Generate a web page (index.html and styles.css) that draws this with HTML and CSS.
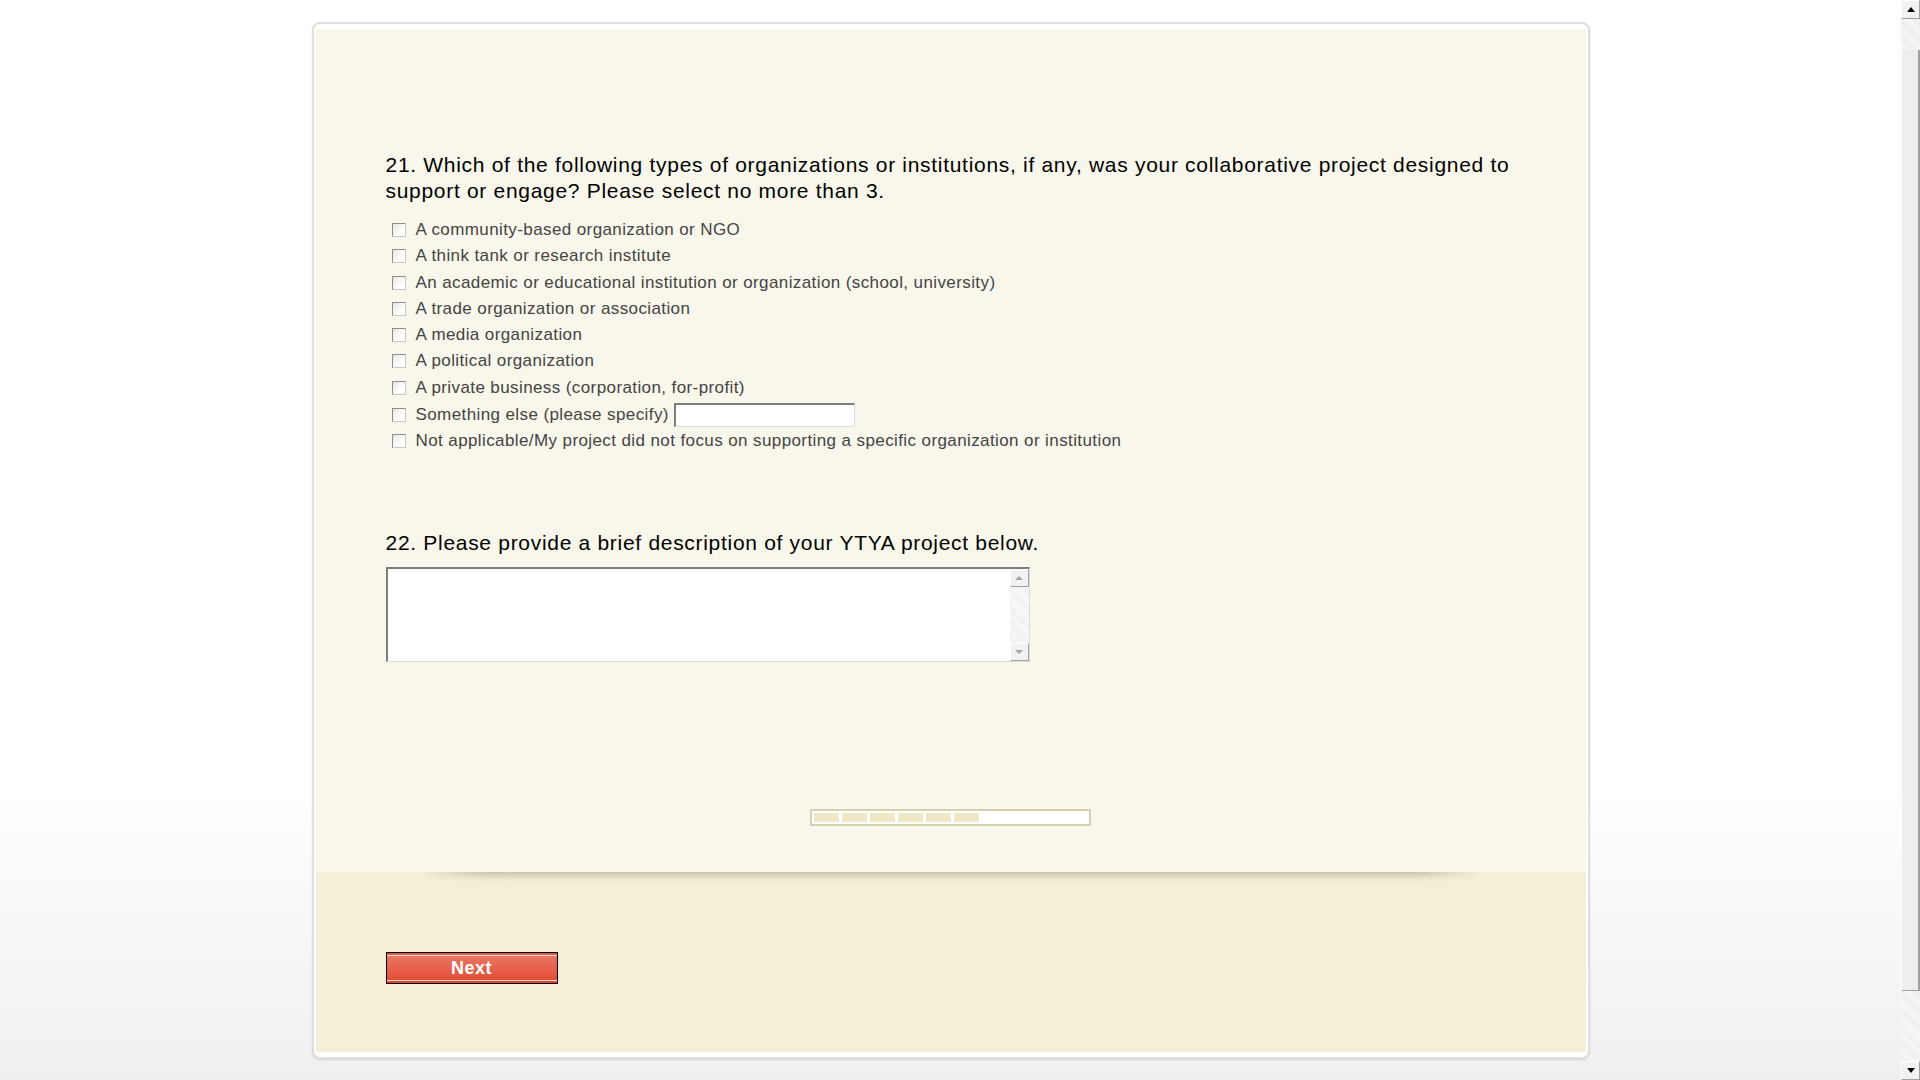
FILE: index.html
```html
<!DOCTYPE html>
<html lang="en">
<head>
    <meta charset="UTF-8">
    <meta name="viewport" content="width=device-width, initial-scale=1.0">
    <title>Survey</title>
    <link rel="stylesheet" href="styles.css">
</head>
<body>
    <div class="page">
        <div class="card">
            <div class="survey">
                <div class="question">
                    <h2 class="question-title">21. Which of the following types of organizations or institutions, if any, was your collaborative project designed to support or engage? Please select no more than 3.</h2>
                    <ul class="options">
                        <li class="option"><span class="box"></span>A community-based organization or NGO</li>
                        <li class="option"><span class="box"></span>A think tank or research institute</li>
                        <li class="option"><span class="box"></span>An academic or educational institution or organization (school, university)</li>
                        <li class="option"><span class="box"></span>A trade organization or association</li>
                        <li class="option"><span class="box"></span>A media organization</li>
                        <li class="option"><span class="box"></span>A political organization</li>
                        <li class="option"><span class="box"></span>A private business (corporation, for-profit)</li>
                        <li class="option option-other"><span class="box"></span>Something else (please specify)<span class="other-input"></span></li>
                        <li class="option"><span class="box"></span>Not applicable/My project did not focus on supporting a specific organization or institution</li>
                    </ul>
                </div>

                <div class="question question-22">
                    <h2 class="question-title">22. Please provide a brief description of your YTYA project below.</h2>
                    <div class="textbox">
                        <div class="textbox-field"></div>
                        <div class="textbox-scroll">
                            <span class="tb-btn"><span class="tb-arrow up"></span></span>
                            <span class="tb-track"></span>
                            <span class="tb-btn"><span class="tb-arrow down"></span></span>
                        </div>
                    </div>
                </div>

                <div class="progress">
                    <span class="progress-seg"></span>
                    <span class="progress-seg"></span>
                    <span class="progress-seg"></span>
                    <span class="progress-seg"></span>
                    <span class="progress-seg"></span>
                    <span class="progress-seg"></span>
                </div>
            </div>
            <div class="footer">
                <div class="footer-shade"></div>
                <button class="next-btn">Next</button>
            </div>
        </div>
    </div>

    <!-- window scrollbar -->
    <div class="scrollbar">
        <span class="sb-btn"><span class="sb-arrow up"></span></span>
        <span class="sb-track"></span>
        <span class="sb-thumb"></span>
        <span class="sb-track sb-track-low"></span>
        <span class="sb-btn"><span class="sb-arrow down"></span></span>
    </div>
</body>
</html>
```

FILE: styles.css
```css
html, body {
    margin: 0;
    padding: 0;
}
body {
    display: flex;
    height: 1080px;
    overflow: hidden;
    font-family: "Liberation Sans", Arial, sans-serif;
    background: linear-gradient(to bottom, #ffffff 0, #ffffff 790px, #efefef 1080px);
}
.page {
    flex: 1;
    padding-top: 22px;
}
.card {
    box-sizing: border-box;
    width: 1278px;
    margin: 0 auto;
    background-color: #fff;
    border: 2px solid #dedede;
    border-radius: 8px;
    padding: 5px 2px 5px 2px;
    box-shadow: 0 1px 2px rgba(0,0,0,0.12);
}
.survey {
    background-color: #f9f7eb;
    height: 843px;
    padding: 123px 70px 0 70px;
    box-sizing: border-box;
}
.question-title {
    margin: 0;
    font-size: 21px;
    letter-spacing: 0.7px;
    font-weight: normal;
    line-height: 26px;
    color: #000;
}
.options {
    list-style: none;
    margin: 13px 0 0 0;
    padding: 0;
}
.option {
    display: flex;
    align-items: center;
    height: 26.25px;
    font-size: 17px;
    letter-spacing: 0.4px;
    color: #444;
}
.option-other {
    height: 27.5px;
}
.box {
    box-sizing: border-box;
    width: 14px;
    height: 14px;
    margin: 0 10px 0 6px;
    border: 1px solid #8d8d8d;
    border-right-color: #c8c8c8;
    border-bottom-color: #c8c8c8;
    background: linear-gradient(135deg, #e6e6e0, #ffffff 70%);
}
.other-input {
    box-sizing: border-box;
    width: 181px;
    height: 24px;
    margin-left: 5px;
    background-color: #fff;
    border: 2px solid #7d7d7d;
    border-right: 1px solid #dcdcdc;
    border-bottom: 1px solid #dcdcdc;
}
.question-22 {
    margin-top: 75px;
}
.textbox {
    display: flex;
    width: 644px;
    height: 95px;
    margin-top: 11px;
    box-sizing: border-box;
    background-color: #fff;
    border: 2px solid #7d7d7d;
    border-right: 1px solid #dcdcdc;
    border-bottom: 1px solid #dcdcdc;
}
.textbox-field {
    flex: 1;
}
.textbox-scroll {
    display: flex;
    flex-direction: column;
    width: 19px;
    background-color: #f6f6f6;
    background-image: repeating-linear-gradient(45deg, #eeeeee 0 1px, #fbfbfb 1px 2px);
}
.tb-btn, .sb-btn {
    display: flex;
    align-items: center;
    justify-content: center;
    height: 18px;
    background-color: #f2f2f2;
    border: 1px solid #fff;
    border-right-color: #a0a0a0;
    border-bottom-color: #a0a0a0;
    box-sizing: border-box;
}
.tb-track, .sb-track {
    flex: 1;
}
.tb-arrow, .sb-arrow {
    width: 0;
    height: 0;
    border-left: 4px solid transparent;
    border-right: 4px solid transparent;
}
.tb-arrow.up { border-bottom: 4px solid #a4a4a4; }
.tb-arrow.down { border-top: 4px solid #a4a4a4; }
.progress {
    display: flex;
    gap: 3px;
    width: 281px;
    height: 17px;
    margin: 147px auto 0 auto;
    box-sizing: border-box;
    padding: 2px;
    background-color: #fff;
    border: 2px solid #d6d1b1;
}
.progress-seg {
    width: 25px;
    background-color: #efe8c4;
}
.footer {
    height: 180px;
    background-color: #f4efd7;
    padding: 0 70px;
    box-sizing: border-box;
}
.footer-shade {
    height: 9px;
    margin: 0 34px 71px 34px;
    background: linear-gradient(to bottom, rgba(140,130,95,0.38), rgba(140,130,95,0) 100%);
    -webkit-mask-image: linear-gradient(to right, transparent, #000 6%, #000 94%, transparent);
    mask-image: linear-gradient(to right, transparent, #000 6%, #000 94%, transparent);
}
.next-btn {
    display: block;
    width: 172px;
    height: 32px;
    padding: 0;
    border: 1px solid #000;
    background: linear-gradient(to bottom, #ea7b68, #e14830);
    box-shadow: inset 0 2px 0 #e35a43, inset 0 3px 0 #fbd9cf, inset 0 -2px 0 #e14830, inset 0 -3px 0 #fbd9cf;
    color: #fff;
    font-family: "Liberation Sans", Arial, sans-serif;
    font-size: 18px;
    letter-spacing: 0.5px;
    font-weight: bold;
    cursor: pointer;
}
.scrollbar {
    display: flex;
    flex-direction: column;
    width: 19px;
    height: 1080px;
    background-color: #f4f4f4;
    background-image: repeating-linear-gradient(45deg, #ececec 0 1px, #fafafa 1px 2px);
}
.sb-btn {
    height: 19px;
    flex: none;
}
.sb-track {
    flex: none;
    height: 31px;
}
.sb-track-low {
    height: 70px;
}
.sb-thumb {
    flex: 1;
    background-color: #eeeeee;
    border-left: 1px solid #fff;
    border-right: 2px solid #a0a0a0;
    border-bottom: 1px solid #a0a0a0;
}
.sb-arrow.up { border-bottom: 5px solid #000; }
.sb-arrow.down { border-top: 5px solid #000; }
```
